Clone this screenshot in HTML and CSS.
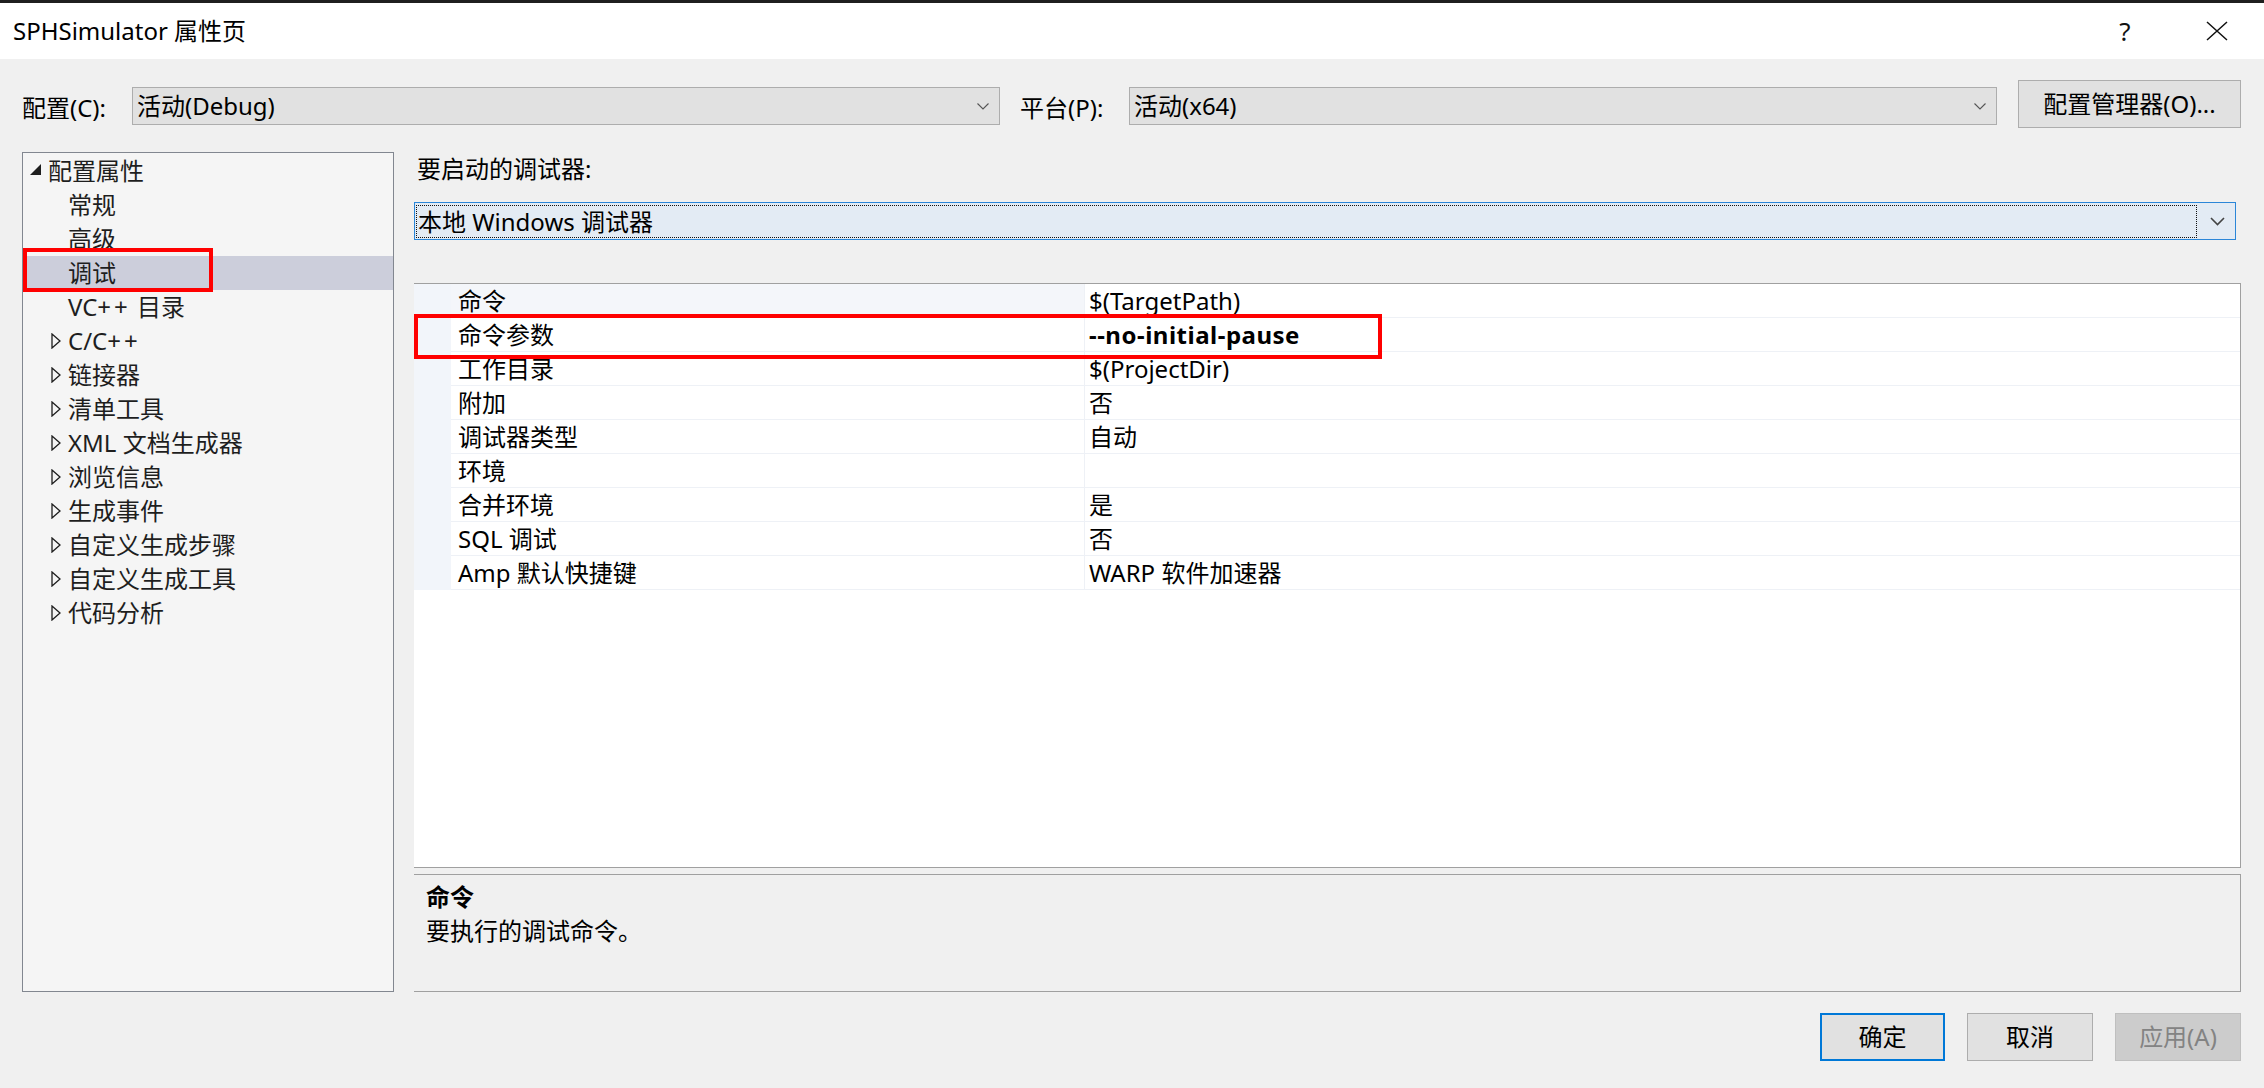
FILE: index.html
```html
<!DOCTYPE html>
<html lang="zh-CN">
<head>
<meta charset="utf-8">
<title>SPHSimulator 属性页</title>
<link rel="stylesheet" href="styles.css">
</head>
<body>
<div class="window">
  <div class="topstrip"></div>
  <div class="titlebar">
    <div class="title">SPHSimulator 属性页</div>
    <div class="tb-help">?</div>
    <div class="tb-close">
      <svg width="22" height="20" viewBox="0 0 22 20"><path d="M1 1 L21 19 M21 1 L1 19" stroke="#111" stroke-width="1.5" fill="none"/></svg>
    </div>
  </div>

  <div class="configrow">
    <span class="lbl lbl-config">配置(C):</span>
    <div class="combo combo-config">
      <span class="combo-text">活动(Debug)</span>
      <svg class="chev-s" width="12" height="7" viewBox="0 0 12 7"><path d="M0.5 0.5 L6 6 L11.5 0.5" stroke="#555" stroke-width="1.1" fill="none"/></svg>
    </div>
    <span class="lbl lbl-platform">平台(P):</span>
    <div class="combo combo-platform">
      <span class="combo-text">活动(x64)</span>
      <svg class="chev-s" width="12" height="7" viewBox="0 0 12 7"><path d="M0.5 0.5 L6 6 L11.5 0.5" stroke="#555" stroke-width="1.1" fill="none"/></svg>
    </div>
    <div class="btn btn-manager">配置管理器(O)...</div>
  </div>

  <div class="main">
    <div class="tree">
      <div class="trow root">
        <span class="slot slot-root"><svg width="11" height="11" viewBox="0 0 11 11"><polygon points="0,11 11,11 11,0" fill="#1e1e1e"/></svg></span>
        <span>配置属性</span>
      </div>
      <div class="trow child"><span class="slot"></span><span>常规</span></div>
      <div class="trow child"><span class="slot"></span><span>高级</span></div>
      <div class="trow child selected"><span class="slot"></span><span>调试</span></div>
      <div class="trow child"><span class="slot"></span><span>VC<span class="plus">++</span> 目录</span></div>
      <div class="trow child"><span class="slot"><svg class="tri" width="10" height="16" viewBox="0 0 10 16"><polygon points="1,1 9,8 1,15" fill="none" stroke="#1e1e1e" stroke-width="1.3"/></svg></span><span>C/C<span class="plus">++</span></span></div>
      <div class="trow child"><span class="slot"><svg class="tri" width="10" height="16" viewBox="0 0 10 16"><polygon points="1,1 9,8 1,15" fill="none" stroke="#1e1e1e" stroke-width="1.3"/></svg></span><span>链接器</span></div>
      <div class="trow child"><span class="slot"><svg class="tri" width="10" height="16" viewBox="0 0 10 16"><polygon points="1,1 9,8 1,15" fill="none" stroke="#1e1e1e" stroke-width="1.3"/></svg></span><span>清单工具</span></div>
      <div class="trow child"><span class="slot"><svg class="tri" width="10" height="16" viewBox="0 0 10 16"><polygon points="1,1 9,8 1,15" fill="none" stroke="#1e1e1e" stroke-width="1.3"/></svg></span><span>XML 文档生成器</span></div>
      <div class="trow child"><span class="slot"><svg class="tri" width="10" height="16" viewBox="0 0 10 16"><polygon points="1,1 9,8 1,15" fill="none" stroke="#1e1e1e" stroke-width="1.3"/></svg></span><span>浏览信息</span></div>
      <div class="trow child"><span class="slot"><svg class="tri" width="10" height="16" viewBox="0 0 10 16"><polygon points="1,1 9,8 1,15" fill="none" stroke="#1e1e1e" stroke-width="1.3"/></svg></span><span>生成事件</span></div>
      <div class="trow child"><span class="slot"><svg class="tri" width="10" height="16" viewBox="0 0 10 16"><polygon points="1,1 9,8 1,15" fill="none" stroke="#1e1e1e" stroke-width="1.3"/></svg></span><span>自定义生成步骤</span></div>
      <div class="trow child"><span class="slot"><svg class="tri" width="10" height="16" viewBox="0 0 10 16"><polygon points="1,1 9,8 1,15" fill="none" stroke="#1e1e1e" stroke-width="1.3"/></svg></span><span>自定义生成工具</span></div>
      <div class="trow child"><span class="slot"><svg class="tri" width="10" height="16" viewBox="0 0 10 16"><polygon points="1,1 9,8 1,15" fill="none" stroke="#1e1e1e" stroke-width="1.3"/></svg></span><span>代码分析</span></div>
      <div class="redbox tree-red"></div>
    </div>

    <div class="panel">
      <div class="dbg-label">要启动的调试器:</div>
      <div class="dbg-combo">
        <div class="focus">本地 Windows 调试器</div>
        <svg class="chev-l" width="15" height="9" viewBox="0 0 15 9"><path d="M1 1 L7.5 7.5 L14 1" stroke="#444" stroke-width="1.6" fill="none"/></svg>
      </div>

      <div class="grid">
        <div class="grow"><div class="gutter"></div><div class="gname sel">命令</div><div class="gval">$(TargetPath)</div></div>
        <div class="grow"><div class="gutter"></div><div class="gname">命令参数</div><div class="gval bold">--no-initial-pause</div></div>
        <div class="grow"><div class="gutter"></div><div class="gname">工作目录</div><div class="gval">$(ProjectDir)</div></div>
        <div class="grow"><div class="gutter"></div><div class="gname">附加</div><div class="gval">否</div></div>
        <div class="grow"><div class="gutter"></div><div class="gname">调试器类型</div><div class="gval">自动</div></div>
        <div class="grow"><div class="gutter"></div><div class="gname">环境</div><div class="gval"></div></div>
        <div class="grow"><div class="gutter"></div><div class="gname">合并环境</div><div class="gval">是</div></div>
        <div class="grow"><div class="gutter"></div><div class="gname">SQL 调试</div><div class="gval">否</div></div>
        <div class="grow"><div class="gutter"></div><div class="gname">Amp 默认快捷键</div><div class="gval">WARP 软件加速器</div></div>
        <div class="redbox grid-red"></div>
      </div>

      <div class="desc">
        <div class="desc-title">命令</div>
        <div class="desc-text">要执行的调试命令。</div>
      </div>
    </div>
  </div>

  <div class="buttons">
    <div class="btn bbtn ok">确定</div>
    <div class="btn bbtn">取消</div>
    <div class="btn bbtn disabled">应用(A)</div>
  </div>
</div>
</body>
</html>
```

FILE: styles.css
```css
* { box-sizing: border-box; }

html, body {
  margin: 0;
  padding: 0;
}

body {
  width: 2264px;
  height: 1088px;
  overflow: hidden;
  background: #f0f0f0;
  font-family: "Noto Sans", "Noto Sans CJK SC", sans-serif;
  font-size: 24px;
  color: #000;
}

.window {
  width: 2264px;
  height: 1088px;
  display: flex;
  flex-direction: column;
}

.topstrip {
  height: 3px;
  background: #1f1f1f;
}

/* title bar */
.titlebar {
  height: 56px;
  background: #fff;
  display: flex;
  align-items: center;
  padding-left: 13px;
  padding-right: 24px;
}

.title {
  flex: 1;
  line-height: 30px;
}

.tb-help {
  width: 46px;
  text-align: center;
  line-height: 30px;
  font-size: 26px;
  color: #111;
}

.tb-close {
  width: 46px;
  margin-left: 46px;
  display: flex;
  justify-content: center;
  align-items: center;
}

/* config row */
.configrow {
  display: flex;
  align-items: flex-start;
  padding: 21px 0 0 22px;
  height: 93px;
}

.lbl {
  line-height: 34px;
  margin-top: 11px;
}

.lbl-config { width: 110px; }
.lbl-platform { width: 109px; margin-left: 20px; }

.combo {
  width: 868px;
  height: 38px;
  margin-top: 7px;
  background: #e1e1e1;
  border: 1px solid #adadad;
  display: flex;
  align-items: center;
  padding-left: 4px;
  padding-right: 10px;
}

.combo-text {
  flex: 1;
  line-height: 34px;
}

.btn {
  height: 48px;
  background: #e1e1e1;
  border: 1px solid #adadad;
  display: flex;
  align-items: center;
  justify-content: center;
  line-height: 34px;
}

.btn-manager {
  width: 223px;
  margin-left: 21px;
}

/* main area */
.main {
  display: flex;
  padding-left: 22px;
  height: 840px;
}

.tree {
  position: relative;
  width: 372px;
  height: 840px;
  background: #f5f5f5;
  border: 1px solid #828790;
  padding-top: 1px;
  color: #1e1e1e;
}

.trow {
  height: 34px;
  margin-left: 4px;
  display: flex;
  align-items: center;
  line-height: 34px;
  white-space: nowrap;
}

.plus {
  letter-spacing: 3px;
}

.trow.selected {
  background: #cccedb;
}

.trow.root { padding-left: 3px; }
.trow.child { padding-left: 24px; }

.slot {
  width: 17px;
  height: 34px;
  display: flex;
  align-items: center;
}

.slot-root {
  width: 18px;
  align-items: center;
  padding-bottom: 3px;
}

.redbox {
  position: absolute;
  border: 4px solid #ff0000;
  pointer-events: none;
}

.tree-red {
  left: 0;
  top: 95px;
  width: 190px;
  height: 44px;
}

/* right panel */
.panel {
  margin-left: 20px;
  width: 1827px;
  display: flex;
  flex-direction: column;
}

.dbg-label {
  height: 34px;
  line-height: 34px;
  padding-left: 3px;
}

.dbg-combo {
  margin-top: 16px;
  height: 38px;
  width: 1822px;
  background: #e3ebf4;
  border: 1px solid #2b86d8;
  display: flex;
  align-items: center;
  padding: 2px 10px 1px 1px;
}

.focus {
  flex: 1;
  height: 33px;
  border: 1px dotted #111;
  line-height: 31px;
  padding-left: 1px;
  margin-right: 13px;
}

.grid {
  position: relative;
  margin-top: 43px;
  height: 585px;
  background: #fff;
  border-top: 1px solid #a0a0a0;
  border-right: 1px solid #a0a0a0;
  border-bottom: 1px solid #a0a0a0;
}

.grow {
  display: flex;
  height: 34px;
}

.gutter {
  width: 37px;
  background: #f2f5fa;
}

.gname {
  width: 634px;
  border-right: 1px solid #eef1f6;
  border-bottom: 1px solid #eef1f6;
  padding-left: 7px;
  line-height: 33px;
  white-space: nowrap;
}

.gname.sel {
  background: #f4f6fa;
}

.gval {
  flex: 1;
  border-bottom: 1px solid #eef1f6;
  padding-left: 4px;
  line-height: 33px;
  white-space: nowrap;
}

.bold {
  font-weight: 700;
  letter-spacing: 0.5px;
}

.grid-red {
  left: 0;
  top: 30px;
  width: 968px;
  height: 45px;
}

.desc {
  margin-top: 6px;
  height: 118px;
  border-top: 1px solid #a0a0a0;
  border-bottom: 1px solid #a0a0a0;
  border-right: 1px solid #a0a0a0;
  padding: 5px 0 0 12px;
}

.desc-title {
  font-weight: 700;
  line-height: 34px;
}

.desc-text {
  line-height: 34px;
}

/* bottom buttons */
.buttons {
  display: flex;
  justify-content: flex-end;
  gap: 22px;
  padding-right: 23px;
  margin-top: 21px;
}

.bbtn {
  width: 126px;
}

.bbtn.ok {
  width: 125px;
  border: 2px solid #0078d7;
}

.bbtn.disabled {
  background: #cccccc;
  border-color: #bfbfbf;
  color: #838383;
}
```
